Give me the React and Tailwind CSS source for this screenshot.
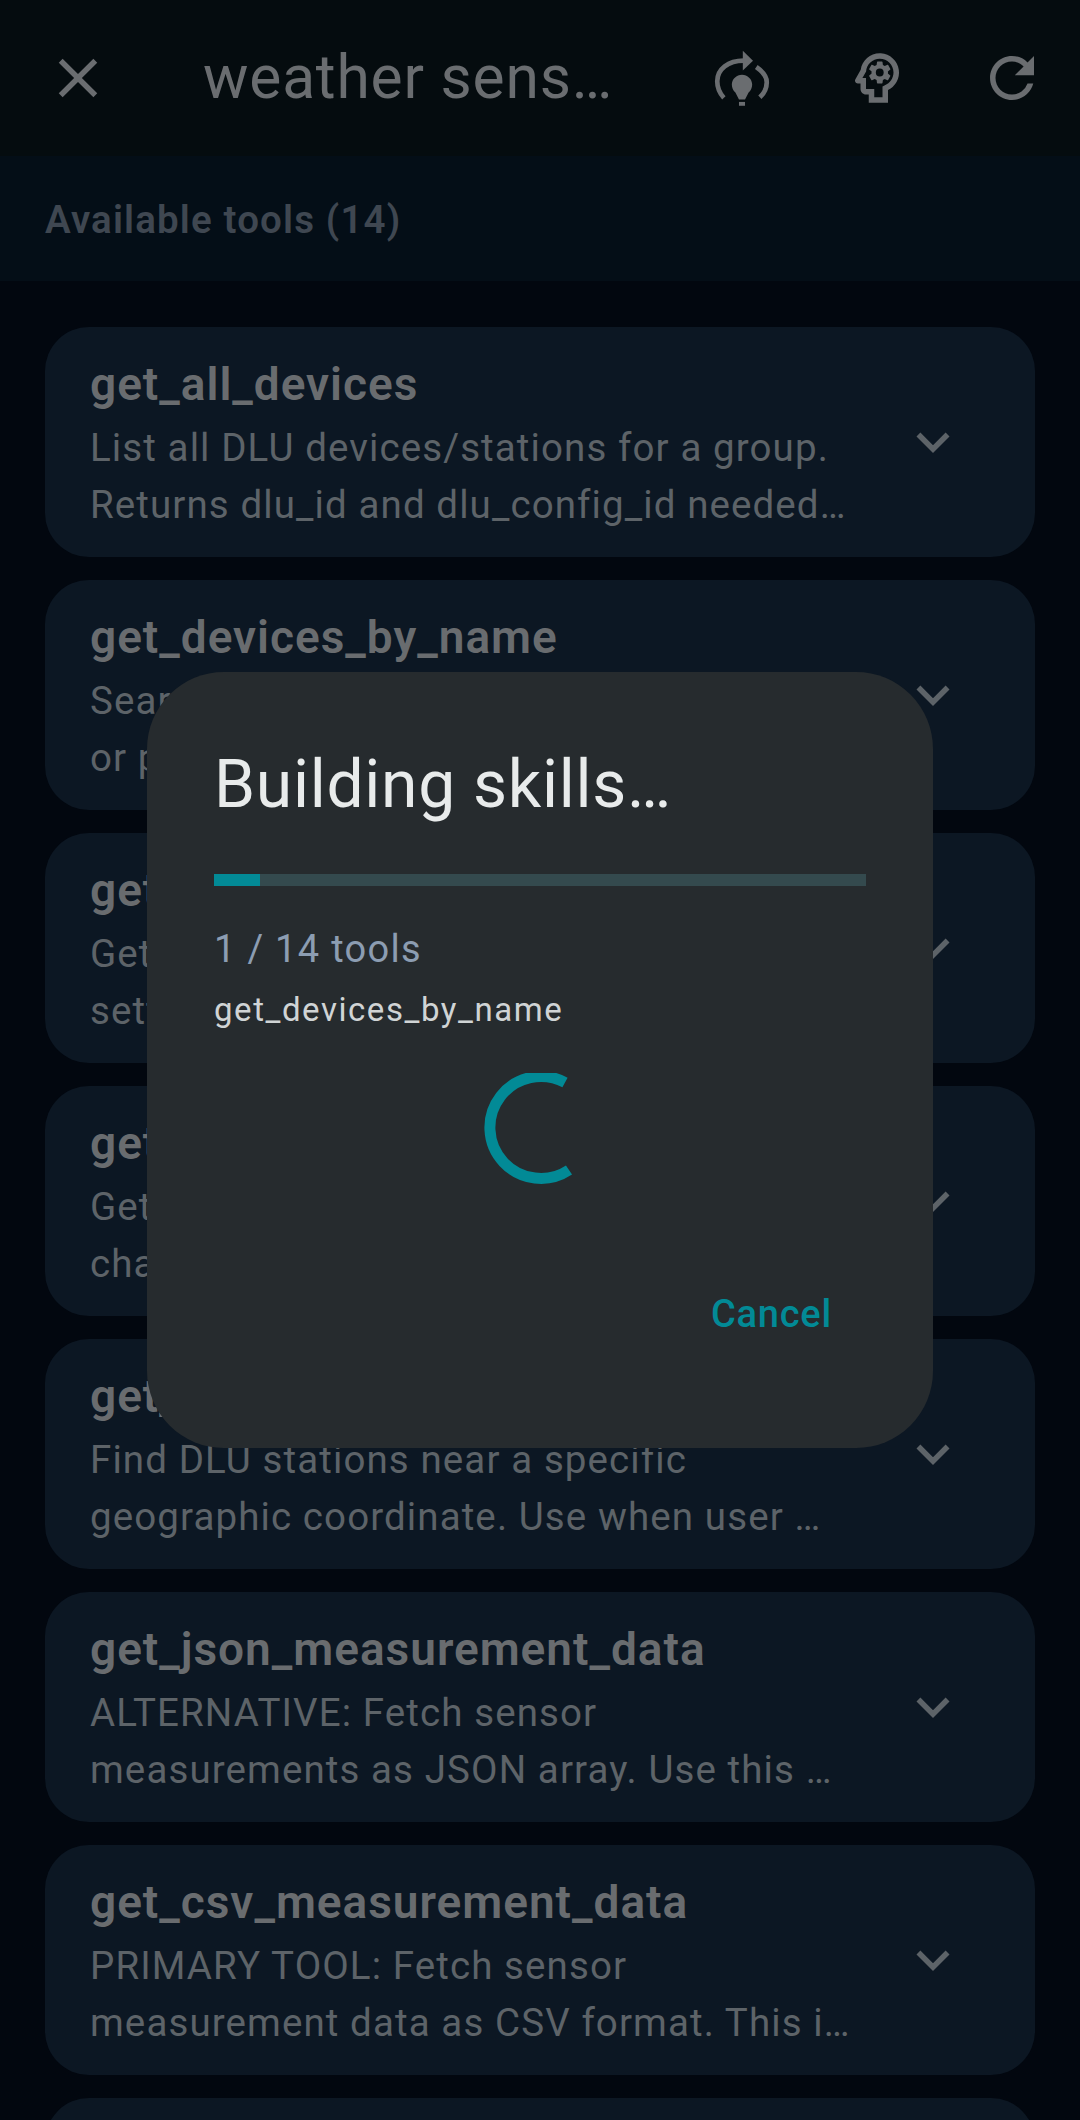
import React from "react";
import { MdClose, MdOutlinePsychology, MdRefresh, MdExpandMore } from "react-icons/md";

const tools = [
  ["get_all_devices", "List all DLU devices/stations for a group.", "Returns dlu_id and dlu_config_id needed…"],
  ["get_devices_by_name", "Search for DLU devices by station name", "or partial name match. Use when user…"],
  ["get_device_details", "Get detailed device information and", "settings for one specific station…"],
  ["get_device_channels", "Get the list of measurement", "channels available on a station…"],
  ["get_nearby_devices", "Find DLU stations near a specific", "geographic coordinate. Use when user …"],
  ["get_json_measurement_data", "ALTERNATIVE: Fetch sensor", "measurements as JSON array. Use this …"],
  ["get_csv_measurement_data", "PRIMARY TOOL: Fetch sensor", "measurement data as CSV format. This i…"],
];

function RefreshBulb() {
  return (
    <svg viewBox="0 0 24 24" className="w-[66px] h-[66px]" fill="none" stroke="currentColor">
      <path d="M5.4 19.2C3.9 17.6 3 15.5 3 13.2 3 8.8 7 5.7 12.6 5.7" strokeWidth="1.7" />
      <path d="M17.2 8C19.6 9.7 21 11.3 21 13.5 21 15.6 20 17.6 18.5 19" strokeWidth="1.7" />
      <path d="M12.3 2.1 16 5.7 12.3 9.3Z" fill="currentColor" stroke="none" />
      <path d="M12 10.8c2 0 3.7 1.6 3.7 3.6 0 1.2-.5 2.2-1.3 2.9l-1.3 2.5h-2.2l-1.3-2.5c-.8-.7-1.3-1.7-1.3-2.9 0-2 1.7-3.6 3.7-3.6Z" fill="currentColor" stroke="none" />
      <rect x="10.9" y="20.7" width="2.2" height="1.4" fill="currentColor" stroke="none" />
    </svg>
  );
}

function ToolCard({ name, l1, l2 }) {
  return (
    <div className="h-[230px] shrink-0 rounded-[44px] bg-[#0c1723] pl-[45px] pr-[69px] flex items-center justify-between">
      <div className="min-w-0 pt-[5px]">
        <div className="text-[46px] leading-[56px] font-semibold text-[#696c6f] tracking-[0.97px] whitespace-nowrap">{name}</div>
        <div className="text-[38.5px] leading-[57px] text-[#5d6368] tracking-[1.1px] whitespace-nowrap mt-[7px]">{l1}</div>
        <div className="text-[38.5px] leading-[57px] text-[#5d6368] tracking-[1.1px] whitespace-nowrap">{l2}</div>
      </div>
      <MdExpandMore className="w-[66px] h-[66px] text-[#5d6368] shrink-0" />
    </div>
  );
}

export default function App() {
  return (
    <div className="relative w-[1080px] h-[2120px] overflow-hidden bg-[#02070f] font-['Roboto',sans-serif]">
      <header className="h-[156px] bg-[#050c0f] flex items-center text-[#6a6d70]">
        <MdClose className="w-[66px] h-[66px] ml-[45px] shrink-0" />
        <div className="ml-[92px] w-[440px] text-[60.5px] tracking-[0.8px] leading-none whitespace-nowrap">weather sens…</div>
        <div className="ml-auto mr-[35px] flex items-center gap-[69px]">
          <RefreshBulb />
          <MdOutlinePsychology className="w-[66px] h-[66px]" />
          <MdRefresh className="w-[66px] h-[66px]" />
        </div>
      </header>

      <div className="h-[125px] bg-[#040e17] flex items-center px-[45px] pt-[2px]">
        <div className="text-[38.5px] font-semibold text-[#3f4751] tracking-[1.15px]">Available tools (14)</div>
      </div>

      <div className="px-[45px] pt-[46px] flex flex-col gap-[23px]">
        {tools.map((t) => (
          <ToolCard key={t[0]} name={t[0]} l1={t[1]} l2={t[2]} />
        ))}
        <div className="h-[230px] shrink-0 rounded-[44px] bg-[#0c1723]" />
      </div>

      <div className="absolute left-[147px] top-[672px] w-[786px] h-[776px] rounded-[77px] bg-[#262b2e] pt-[69px] pb-[40px] pl-[67px] pr-[67px] flex flex-col">
        <div className="text-[66px] leading-[88px] tracking-[0.7px] text-[#e8ebeb] whitespace-nowrap">Building skills…</div>
        <div className="mt-[45px] h-[12px] w-[652px] bg-[#344a4e]">
          <div className="h-full w-[46px] bg-[#028a96]" />
        </div>
        <div className="mt-[38px] text-[38px] leading-[50px] text-[#8c9db2] tracking-[1.3px]">1 / 14 tools</div>
        <div className="mt-[14px] text-[33px] leading-[44px] text-[#d0d4d5] tracking-[1.55px]">get_devices_by_name</div>
        <div className="mt-[41px] flex justify-center">
          <svg viewBox="0 0 112 112" className="w-[112px] h-[112px] -translate-x-[1px]" fill="none">
            <path d="M82 9.5A51 51 0 1 0 86 97" stroke="#028a96" strokeWidth="11" />
          </svg>
        </div>
        <div className="mt-auto mb-[69px] text-right pr-[34px] text-[38px] leading-[50px] font-medium text-[#028a96] tracking-[0.8px]">Cancel</div>
      </div>
    </div>
  );
}
